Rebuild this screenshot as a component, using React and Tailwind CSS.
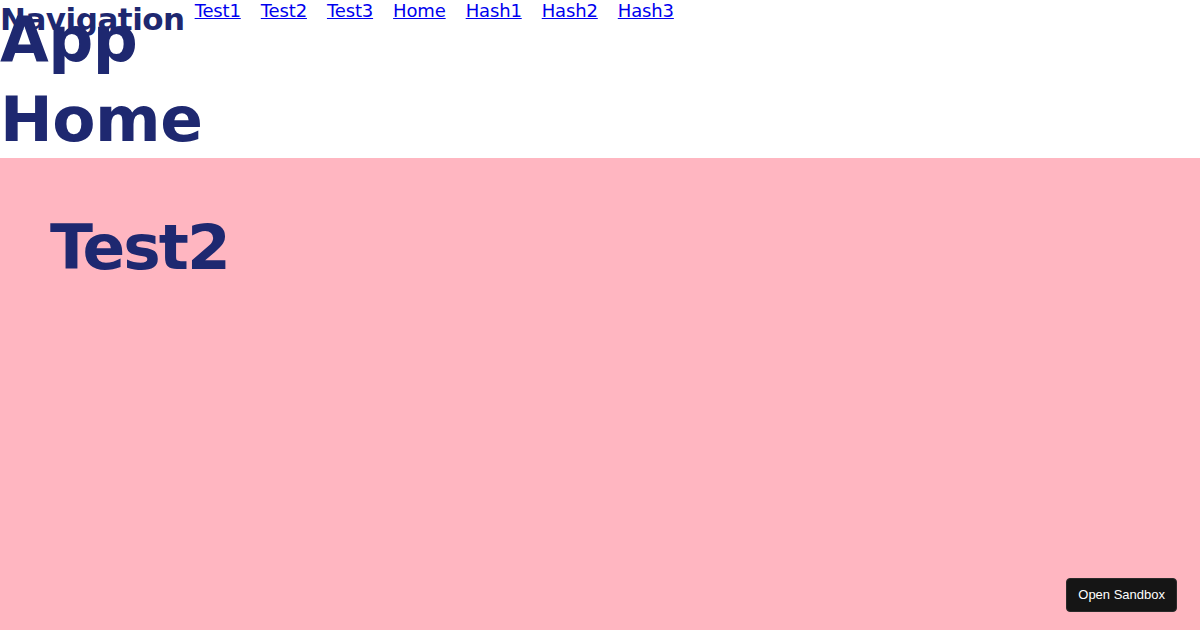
export default function App() {
  const links = ["Test1", "Test2", "Test3", "Home", "Hash1", "Hash2", "Hash3"];
  const font = { fontFamily: '"DejaVu Sans", "Noto Sans", sans-serif' };
  return (
    <div className="relative flex min-h-[630px] w-full flex-col bg-white" style={font}>
      <nav className="absolute left-0 top-0 z-10 flex items-start gap-[10px]">
        <h2 className="m-0 text-[31px] font-bold leading-[38px] tracking-[-0.5px] text-[#1e2870]">Navigation</h2>
        <ul className="m-0 flex list-none gap-[20px] p-0">
          {links.map((l) => (
            <li key={l}>
              <a href="#" className="text-[18px] leading-[22px] tracking-[-0.15px] text-[#0000ee] underline">
                {l}
              </a>
            </li>
          ))}
        </ul>
      </nav>
      <header className="h-[158px] bg-white">
        <h1 className="m-0 w-[215px] text-[63px] font-bold leading-[80px] tracking-[-0.5px] text-[#1e2870]">App Home</h1>
      </header>
      <main className="flex-1 bg-[#ffb6c1] p-[50px]">
        <h1 className="m-0 text-[63px] font-bold leading-[80px] tracking-[-2px] text-[#1e2870]">Test2</h1>
      </main>
      <button
        className="absolute bottom-[18px] right-[23px] rounded-[4px] border border-[#2a2a2a] bg-[#151515] px-[11px] py-[7px] text-[13px] leading-[18px] text-white"
        style={{ fontFamily: '"Liberation Sans", Arial, sans-serif' }}
      >
        Open Sandbox
      </button>
    </div>
  );
}
